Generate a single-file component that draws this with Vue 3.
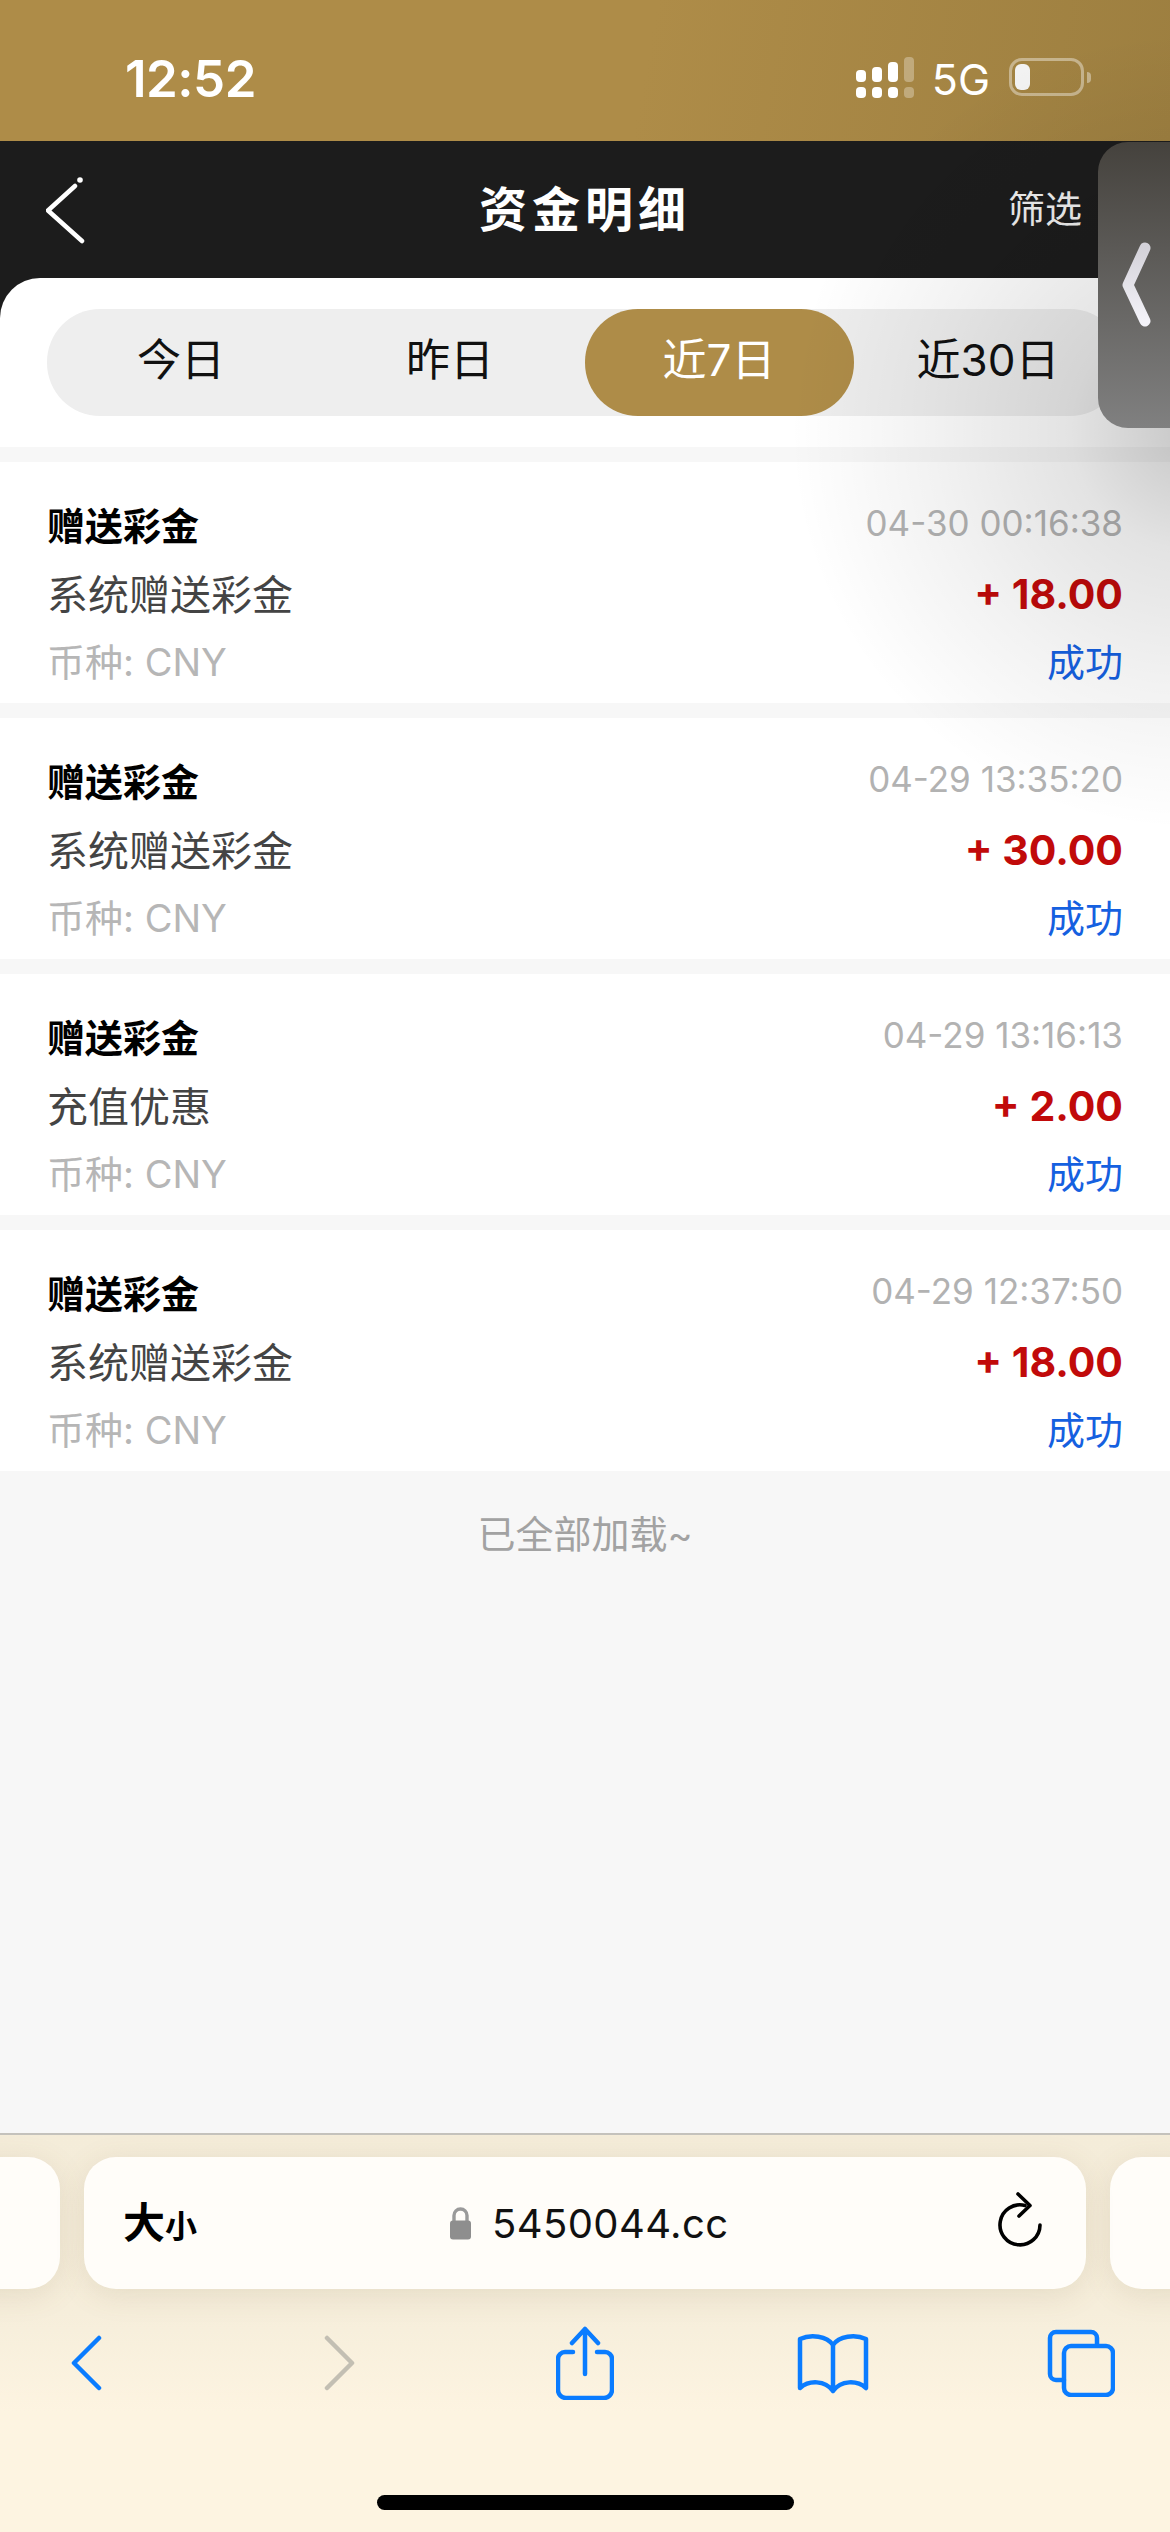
<template>
  <div class="page">
    <header class="status">
      <span class="time">12:52</span>
      <div class="status-right">
        <div class="signal">
          <div v-for="(h, i) in signalBars" :key="i" class="signal-col" :class="{ dim: i === 3 }">
            <i :style="{ height: h + 'px' }"></i>
            <i class="dot"></i>
          </div>
        </div>
        <span class="net">5G</span>
        <div class="battery">
          <div class="battery-body"><i></i></div>
          <div class="battery-cap"></div>
        </div>
      </div>
    </header>

    <nav class="nav">
      <svg class="nav-back" width="44" height="70" viewBox="0 0 44 70">
        <path class="back-line" d="M29 11 L2 35.500 L36 66" />
        <circle cx="34" cy="5" r="2.800" fill="#fff" />
      </svg>
      <h1 class="nav-title">资金明细</h1>
      <span class="nav-filter">筛选</span>
    </nav>

    <div class="tabs-wrap">
      <div class="tabs-panel">
        <div class="tabs">
          <div v-for="t in tabs" :key="t" class="tab" :class="{ active: t === active }">{{ t }}</div>
        </div>
      </div>
    </div>

    <main class="list">
      <section v-for="(r, i) in records" :key="i" class="card">
        <div class="row">
          <span class="title">赠送彩金</span>
          <span class="stamp">{{ r.time }}</span>
        </div>
        <div class="row">
          <span class="desc">{{ r.desc }}</span>
          <span class="amount">{{ r.amount }}</span>
        </div>
        <div class="row">
          <span class="coin">币种: CNY</span>
          <span class="state">成功</span>
        </div>
      </section>
      <p class="end">已全部加载~</p>
    </main>

    <footer class="browser">
      <div class="url-row">
        <div class="url-side left"></div>
        <div class="url">
          <span class="aa">大<small>小</small></span>
          <div class="domain">
            <svg width="23" height="33" viewBox="0 0 23 33">
              <path d="M5 15 V8.5 a6.5 6.5 0 0 1 13 0 V15" fill="none" stroke="#9a9a9a" stroke-width="3.4" />
              <rect x="1" y="13.500" width="21" height="19" rx="3" fill="#8e8e8e" />
            </svg>
            <span>5450044.cc</span>
          </div>
          <svg class="reload" width="46" height="56" viewBox="0 0 46 56">
            <path d="M28 13.500 A20 20 0 1 0 43 33" fill="none" stroke="#000" stroke-width="3.6" stroke-linecap="round" />
            <path d="M21 2 L33 13.500 L22 24" fill="none" stroke="#000" stroke-width="3.6" stroke-linecap="round" stroke-linejoin="round" />
          </svg>
        </div>
        <div class="url-side right"></div>
      </div>
      <div class="tools">
        <svg class="tool-back" width="32" height="56" viewBox="0 0 32 56">
          <path d="M29 3 L4 28 L29 53" class="ic" />
        </svg>
        <svg class="tool-forward" width="32" height="56" viewBox="0 0 32 56">
          <path d="M3 3 L28 28 L3 53" class="ic off" />
        </svg>
        <svg width="58" height="74" viewBox="0 0 58 74">
          <path d="M17 26 H9 a7 7 0 0 0 -7 7 V64 a8 8 0 0 0 8 8 H48 a8 8 0 0 0 8 -8 V33 a7 7 0 0 0 -7 -7 H41" class="ic" />
          <path d="M29 3 V48 M16 17 L29 3 L42 17" class="ic" />
        </svg>
        <svg width="72" height="62" viewBox="0 0 72 62">
          <path d="M36 13 C30 4 14 2 3 7 V56 C12 48 28 48 36 59 C44 48 60 48 69 56 V7 C58 2 42 4 36 13 Z M36 13 V59" class="ic" />
        </svg>
        <svg width="68" height="68" viewBox="0 0 68 68">
          <path d="M50 15 V9 a6 6 0 0 0 -6 -6 H9 a6 6 0 0 0 -6 6 V45 a6 6 0 0 0 6 6 H17" class="ic" />
          <rect x="17" y="17" width="49" height="49" rx="7" class="ic" />
        </svg>
      </div>
      <div class="home-wrap"><div class="home"></div></div>
    </footer>

    <div class="glare"></div>
    <div class="handle">
      <svg width="34" height="90" viewBox="0 0 34 90">
        <defs>
          <linearGradient id="chev" x1="0" y1="0" x2="0" y2="1">
            <stop offset="0" stop-color="#d4d2d9" />
            <stop offset="1" stop-color="#f4f3f9" />
          </linearGradient>
        </defs>
        <path d="M25 8 L8 45 L25 81" fill="none" stroke="url(#chev)" stroke-width="11" stroke-linecap="round" stroke-linejoin="round" />
      </svg>
    </div>
  </div>
</template>

<script setup>
const signalBars = [12, 15, 20, 25]
const tabs = ['今日', '昨日', '近7日', '近30日']
const active = '近7日'
const records = [
  { time: '04-30 00:16:38', desc: '系统赠送彩金', amount: '+ 18.00' },
  { time: '04-29 13:35:20', desc: '系统赠送彩金', amount: '+ 30.00' },
  { time: '04-29 13:16:13', desc: '充值优惠', amount: '+ 2.00' },
  { time: '04-29 12:37:50', desc: '系统赠送彩金', amount: '+ 18.00' },
]
</script>

<style>
html, body { margin: 0; background: #f7f7f7; }
</style>

<style scoped>
.page {
  position: relative;
  width: 1170px;
  height: 2532px;
  overflow: hidden;
  display: flex;
  flex-direction: column;
  background: #f7f7f7;
  font-family: Inter, "Noto Sans CJK SC", sans-serif;
}

.status {
  height: 141px;
  box-sizing: border-box;
  flex: none;
  display: flex;
  justify-content: space-between;
  padding: 56px 79px 0 125px;
  background: linear-gradient(100deg, #ae8c48 55%, #9d7f40);
  color: #fff;
}
.time { font-size: 51px; line-height: 46px; font-weight: 600; letter-spacing: -0.5px; }
.status-right { display: flex; align-items: flex-start; }
.signal { display: flex; align-items: flex-end; gap: 6px; height: 41px; margin-top: 1px; }
.signal-col { width: 10px; display: flex; flex-direction: column; gap: 5px; }
.signal-col i { display: block; background: #fff; border-radius: 4px; }
.signal-col .dot { height: 11px; }
.signal-col.dim { opacity: .3; }
.net { margin-left: 18px; font-size: 43px; line-height: 46px; font-weight: 400; }
.battery { display: flex; align-items: center; margin-left: 19px; height: 38px; margin-top: 2px; }
.battery-body {
  width: 75px; height: 38px; box-sizing: border-box;
  border: 3px solid rgba(255, 255, 255, .4); border-radius: 13px; padding: 3px;
}
.battery-body i { display: block; width: 15px; height: 26px; background: #f2f2f2; border-radius: 6px; }
.battery-cap { width: 4px; height: 11px; margin-left: 3px; background: rgba(255, 255, 255, .4); border-radius: 0 4px 4px 0; }

.nav {
  height: 137px;
  flex: none;
  display: flex;
  align-items: center;
  justify-content: space-between;
  position: relative;
  background: #1c1c1c;
  padding: 0 88px 0 46px;
}
.back-line { fill: none; stroke: #fff; stroke-width: 4.5; stroke-linecap: round; stroke-linejoin: round; }
.nav-title {
  position: absolute; left: 0; right: 0; margin: 0;
  text-align: center; color: #fff;
  font-size: 48px; font-weight: 700; letter-spacing: 5px; line-height: 60px;
}
.nav-filter { color: #eee; font-size: 37px; line-height: 40px; }

.tabs-wrap { background: #1c1c1c; flex: none; }
.tabs-panel { height: 169px; box-sizing: border-box; padding: 31px 0 0 47px; background: #fff; border-radius: 40px 40px 0 0; }
.tabs { width: 1076px; height: 107px; display: flex; background: #eee; border-radius: 53px; }
.tab {
  flex: 1; display: flex; align-items: center; justify-content: center;
  font-size: 44px; line-height: 60px; color: #111; border-radius: 53px; padding: 0 1px 6px 0; box-sizing: border-box;
}
.tab.active { background: #ae8c48; color: #fff; }

.list { flex: 1; display: flex; flex-direction: column; padding-top: 15px; }
.card {
  height: 241px; box-sizing: border-box; padding: 30px 47px 7px 47px;
  margin-bottom: 15px; background: #fff;
}
.card:nth-last-child(2) { margin-bottom: 0; }
.row { height: 68px; display: flex; align-items: center; justify-content: space-between; }
.title { font-size: 38px; font-weight: 700; color: #000; margin-top: -6px; }
.stamp { font-size: 35px; color: #b2b2b2; margin-top: -6px; }
.desc { font-size: 41px; color: #444; margin-top: -4px; }
.amount { font-size: 41px; font-weight: 700; color: #c10a0a; }
.coin { font-size: 38px; color: #b6b6b6; margin-top: -6px; }
.state { font-size: 38px; color: #1560e0; margin-top: -6px; }
.end { margin: 40px 0 0; text-align: center; font-size: 38px; line-height: 46px; color: #a2a2a2; }

.browser {
  height: 399px; flex: none; box-sizing: border-box;
  border-top: 2px solid #c4c2bc;
  background: linear-gradient(#f4ecd9, #f6eedb 45%, #fdf4e1 70%);
  display: flex; flex-direction: column;
}
.url-row { display: flex; gap: 24px; margin: 22px -60px 0 -60px; flex: none; }
.url-side { width: 120px; height: 132px; background: #fffdf9; border-radius: 32px; flex: none; box-shadow: 0 6px 30px rgba(120, 100, 60, .13); }
.url {
  flex: 1; height: 132px; box-sizing: border-box; position: relative;
  display: flex; align-items: center; justify-content: space-between;
  padding: 0 43px 0 39px; background: #fffdf9; border-radius: 32px;
  box-shadow: 0 6px 30px rgba(120, 100, 60, .13);
}
.aa { font-size: 42px; font-weight: 700; color: #000; line-height: 1; }
.aa small { font-size: 32px; font-weight: 700; }
.domain {
  position: absolute; left: 365px; top: 0; bottom: 0;
  display: flex; align-items: center; gap: 20px;
  font-size: 40px; color: #111; letter-spacing: 0.4px;
}
.reload { margin-top: -6px; }
.tools { display: grid; grid-template-columns: repeat(5, 248px); justify-content: center; justify-items: center; align-items: center; margin-top: 37px; flex: none; height: 74px; }
.tool-back { margin-right: 6px; }
.tool-forward { margin-left: 6px; }
.ic { fill: none; stroke: #0a7cff; stroke-width: 4.5; stroke-linecap: round; stroke-linejoin: round; }
.ic.off { stroke: #c3bfb3; }
.home-wrap { flex: 1; display: flex; justify-content: center; padding-top: 95px; }
.home { width: 417px; height: 15px; border-radius: 8px; background: #000; }

.glare {
  position: absolute; left: 0; right: 0; top: 0; bottom: 0; pointer-events: none;
  background: radial-gradient(circle 400px at 1190px 430px, rgba(0, 0, 0, .22), rgba(0, 0, 0, .11) 30%, rgba(0, 0, 0, .05) 65%, transparent);
}
.handle {
  position: absolute; right: 0; top: 142px; width: 72px; height: 286px;
  display: flex; align-items: center; padding-left: 22px; box-sizing: border-box;
  background: linear-gradient(#45423d, #808080);
  border-radius: 30px 0 0 30px;
}
</style>
